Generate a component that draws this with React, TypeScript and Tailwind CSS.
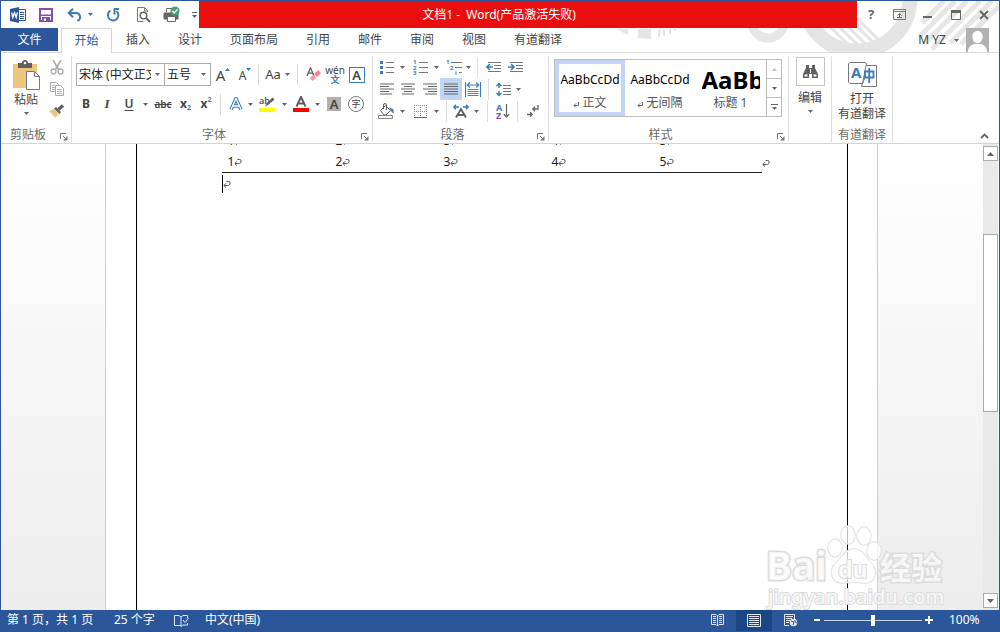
import React from "react";

type Kids = { children?: React.ReactNode };

const BLUE = "#3b7bb8";
const GRAY = "#5f5f5f";

function Svg({ w, h, children, className = "" }: Kids & { w: number; h: number; className?: string }) {
  return (
    <svg width={w} height={h} viewBox={`0 0 ${w} ${h}`} fill="none" aria-hidden="true" className={`shrink-0 ${className}`}>
      {children}
    </svg>
  );
}

function Caret() {
  return (
    <Svg w={5} h={3}>
      <path d="M0 0h5L2.5 3z" fill="#666" />
    </Svg>
  );
}

function Tool({ label, className = "w-5", children }: Kids & { label: string; className?: string }) {
  return (
    <button type="button" aria-label={label} className={`flex h-[22px] shrink-0 items-center justify-center ${className}`}>
      {children}
    </button>
  );
}

function Drop({ label, className = "w-[10px]" }: { label: string; className?: string }) {
  return (
    <Tool label={label} className={className}>
      <Caret />
    </Tool>
  );
}

function Sep({ className = "mx-1" }: { className?: string }) {
  return <span className={`h-[21px] w-px shrink-0 bg-[#dcdcdc] ${className}`} />;
}

function Group({ title, launcher = true, className, children }: Kids & { title: string; launcher?: boolean; className: string }) {
  return (
    <section aria-label={title} className={`flex shrink-0 flex-col border-r border-[#dedede] ${className}`}>
      <div className="min-h-0 flex-1">{children}</div>
      <div className="flex h-[14px] items-center text-[#6a6a6a]">
        <span className="flex-1 text-center leading-[14px] whitespace-nowrap">{title}</span>
        {launcher && (
          <button type="button" aria-label={`${title}设置`} className="w-4 pt-1 pl-[5px]">
            <Svg w={8} h={8}>
              <path d="M.5 6V.5H6M3 3l3 3" stroke="#777" />
              <path d="M7.500 3v4.500H3z" fill="#777" />
            </Svg>
          </button>
        )}
      </div>
    </section>
  );
}

function Lines({ rows }: { rows: [number, number][] }) {
  return (
    <Svg w={14} h={12}>
      {rows.map(([x, w], i) => (
        <rect key={i} x={x} y={i * 2.5 + 0.5} width={w} height="1" fill="#666" />
      ))}
    </Svg>
  );
}

function Return({ color = "#555" }: { color?: string }) {
  return (
    <Svg w={8} h={8}>
      <path d="M3.500 1.500h2.200a1.400 1.400 0 0 1 1.400 1.600c0 1.600-.8 2.400-2.400 2.400H1M3 3.300L.9 5.500 3 7.600" stroke={color} />
    </Svg>
  );
}

function Decoration() {
  return (
    <svg className="absolute top-0 right-0 h-[52px] w-[400px]" viewBox="600 0 400 52" aria-hidden="true" fill="none">
      <g fill="#e6e6e6">
        <path d="M617 28h12v6zM639 28h13v10l-13-1z" />
        <path d="M659 28h2v8h-2zM664 28h2v7h-2zM670 28h2v5h-2zM675 28h2v2h-2z" />
      </g>
      <circle cx="769" cy="21" r="16" stroke="#e6e6e6" strokeWidth="9" />
      <circle cx="858" cy="-3" r="53" stroke="#e4e4e4" strokeWidth="15" />
      <g stroke="#e4e4e4" strokeWidth="3">
        <path d="M822 17l34 33M829 15l34 33M837 14l34 33M846 14l30 29M855 15l27 26" />
      </g>
      <g stroke="#e6e6e6" strokeWidth="5">
        <path d="M945 0l-22 22M956 0l-36 36M968 0l-42 42M981 0l-48 48M993 0l-42 42M1000 5l-38 38" />
      </g>
    </svg>
  );
}

function QuickAccess() {
  return (
    <div className="flex h-[27px] w-[198px] shrink-0 items-center">
      <Tool label="Word" className="ml-[7px] w-5">
        <Svg w={16} h={16}>
          <path d="M8.500 2.500h7v11h-7" fill="#fff" stroke="#2b579a" />
          <path d="M10 5.500h4M10 7.500h4M10 9.500h4M10 11.500h4" stroke="#2b579a" />
          <path d="M0 2l9-2v16l-9-2z" fill="#2b579a" />
          <path d="M1.600 5.500l1.200 5 1.700-4.800 1.700 4.800 1.200-5" stroke="#fff" strokeWidth="1.300" />
        </Svg>
      </Tool>
      <Tool label="保存" className="ml-2 w-5">
        <Svg w={14} h={14}>
          <path d="M1 1h12v12H1z" stroke="#864cb0" strokeWidth="2" />
          <path d="M2 6.500h10v1.500H2zM3 9h8v4H3z" fill="#864cb0" />
          <path d="M5 10.500h2V13H5z" fill="#fff" />
        </Svg>
      </Tool>
      <Tool label="撤消" className="ml-[9px] w-5">
        <Svg w={16} h={14}>
          <path d="M2 5h7.500a4 4 0 0 1 .8 7.800" stroke={BLUE} strokeWidth="2" />
          <path d="M6 .8L1.700 5 6 9.200" stroke={BLUE} strokeWidth="2" />
        </Svg>
      </Tool>
      <Drop label="撤消列表" />
      <Tool label="重复" className="ml-2 w-5">
        <Svg w={14} h={14}>
          <path d="M4.500 2.500A5.300 5.300 0 1 0 10.500 3" stroke={BLUE} strokeWidth="2" />
          <path d="M8 1h5M8.500 1v5.500" stroke={BLUE} strokeWidth="2" />
        </Svg>
      </Tool>
      <Tool label="打印预览" className="ml-[10px] w-5">
        <Svg w={15} h={16}>
          <path d="M11.500 5V3.500l-3-3h-7v14h6" stroke="#777" />
          <path d="M8.500 1v3h3" stroke="#777" />
          <circle cx="7.500" cy="8.500" r="3.300" fill="#fff" stroke="#666" strokeWidth="1.500" />
          <path d="M10 11l4 4" stroke="#666" strokeWidth="2" />
        </Svg>
      </Tool>
      <Tool label="快速打印" className="ml-2 w-5">
        <Svg w={17} h={17}>
          <path d="M3.500 6V2.500h6M1 7h14v6H1z" stroke="#666" fill="none" />
          <path d="M1 7h14v6h-2v-2H4v2H1z" fill="#666" />
          <path d="M4.500 10.500h8v5h-8z" fill="#fff" stroke="#666" />
          <circle cx="12" cy="5" r="4.600" fill="#4f9f7c" />
          <path d="M9.500 5l1.800 1.900L14.500 3.400" stroke="#fff" strokeWidth="1.300" />
        </Svg>
      </Tool>
      <Tool label="自定义快速访问工具栏" className="ml-2 w-[10px]">
        <Svg w={5} h={6}>
          <path d="M0 .5h5" stroke="#666" />
          <path d="M0 3h5L2.500 6z" fill="#666" />
        </Svg>
      </Tool>
    </div>
  );
}

function WindowButtons() {
  return (
    <div className="flex h-[27px] w-[142px] shrink-0 items-center">
      <Tool label="帮助" className="w-7 text-[13px] font-bold text-[#666]">?</Tool>
      <Tool label="功能区显示选项" className="w-7">
        <Svg w={13} h={11}>
          <path d="M.5.500h12v10H.5zM1 2.500h11" stroke="#777" />
          <path d="M6.500 9V4.500M4.300 6.500l2.200-2.200 2.200 2.200M4 8.500h5" stroke="#666" />
        </Svg>
      </Tool>
      <Tool label="最小化" className="w-[29px] pt-1">
        <Svg w={9} h={2}><path d="M0 1h9" stroke="#666" strokeWidth="2" /></Svg>
      </Tool>
      <Tool label="最大化" className="w-7">
        <Svg w={10} h={10}>
          <path d="M.5 1h9v8.500h-9z" stroke="#666" />
          <path d="M0 1.500h10" stroke="#666" strokeWidth="3" />
        </Svg>
      </Tool>
      <Tool label="关闭" className="w-7">
        <Svg w={10} h={10}><path d="M1 1l8 8M9 1L1 9" stroke="#666" strokeWidth="2" /></Svg>
      </Tool>
    </div>
  );
}

const tabs = ["插入", "设计", "页面布局", "引用", "邮件", "审阅", "视图", "有道翻译"];

function TabBar() {
  return (
    <nav className="relative flex h-[25px] shrink-0 items-stretch border-b border-[#dadada] text-[#444]">
      <button type="button" className="mb-px w-[57px] bg-[#2b579a] text-white">文件</button>
      <button type="button" className="-mb-px ml-[3px] w-[51px] border border-b-0 border-[#d5d5d5] bg-white text-[#2b579a]">开始</button>
      {tabs.map((t) => (
        <button key={t} type="button" className="px-[14px] whitespace-nowrap">{t}</button>
      ))}
      <div className="ml-auto flex items-center pr-[10px]">
        <button type="button" className="flex items-center gap-2">M YZ<Caret /></button>
        <Svg w={23} h={24} className="ml-[7px]">
          <path d="M0 0h23v24H0z" fill="#b1b1b1" />
          <ellipse cx="11.500" cy="9" rx="5.200" ry="6.200" fill="#fff" />
          <path d="M2 24c0-5 3-7.500 7-8h5c4 .5 7 3 7 8z" fill="#fff" />
        </Svg>
      </div>
    </nav>
  );
}

function Clipboard() {
  return (
    <Group title="剪贴板" className="w-[71px]">
      <div className="flex">
        <button type="button" className="ml-[5px] flex w-10 flex-col items-center pt-1">
          <Svg w={28} h={31}>
            <path d="M1 4h24v24H1z" fill="#ecc67e" />
            <path d="M6 3h4a3 3 0 0 1 6 0h4v5H6z" fill="#606060" />
            <circle cx="13" cy="3" r="1.300" fill="#fff" />
            <path d="M14.500 11.500h8l5 5v13h-13z" fill="#fff" stroke="#777" />
            <path d="M22.500 12v4.500h5" stroke="#777" />
          </Svg>
          <span className="pt-px leading-4">粘贴</span>
          <span className="mt-1"><Caret /></span>
        </button>
        <div className="flex flex-col">
          <Tool label="剪切" className="w-[21px]">
            <Svg w={14} h={15}>
              <path d="M3 0l5.500 9.500M11 0L5.500 9.500" stroke="#aaa" strokeWidth="1.600" />
              <circle cx="3.500" cy="11.500" r="2.500" stroke="#aaa" strokeWidth="1.300" />
              <circle cx="10.500" cy="11.500" r="2.500" stroke="#aaa" strokeWidth="1.300" />
            </Svg>
          </Tool>
          <Tool label="复制" className="w-[21px]">
            <Svg w={14} h={14}>
              <path d="M.5.500h6l2 2v7h-8z" fill="#fff" stroke="#aaa" />
              <path d="M5.500 3.500h5l3 3v7h-8z" fill="#fff" stroke="#aaa" />
              <path d="M7 7.500h5M7 9.500h5M7 11.500h5M2 3.500h3M2 5.500h3M2 7.500h3" stroke="#b5b5b5" />
            </Svg>
          </Tool>
          <Tool label="格式刷" className="w-[21px]">
            <Svg w={16} h={14}>
              <path d="M0 7l5-2 5 4.500L6.500 14z" fill="#ecc67e" />
              <path d="M5 4.500l2-1.500 5 5-1.500 2z" fill="#606060" />
              <path d="M9.500 5.500L14 1.500" stroke="#606060" strokeWidth="3.200" />
            </Svg>
          </Tool>
        </div>
      </div>
    </Group>
  );
}

function Combo({ label, value, className }: { label: string; value: string; className: string }) {
  return (
    <label className={`relative h-[23px] shrink-0 border border-[#ababab] bg-white ${className}`}>
      <span className="sr-only">{label}</span>
      <select defaultValue={value} className="block h-full w-full appearance-none overflow-hidden bg-transparent pr-[13px] pl-[2px] text-[12px] leading-[20px] text-[#222] outline-none">
        <option>{value}</option>
      </select>
      <span className="pointer-events-none absolute top-[9px] right-1"><Caret /></span>
    </label>
  );
}

function FontGroup() {
  return (
    <Group title="字体" className="w-[301px]">
      <div className="flex items-center pt-[7px] pl-1">
        <Combo label="字体" value="宋体 (中文正文)" className="w-[89px]" />
        <Combo label="字号" value="五号" className="-ml-px w-[47px]" />
        <Tool label="增大字号" className="ml-px w-[22px]">
          <span className="text-[15px] leading-4">A</span>
          <Svg w={5} h={3} className="-mt-[10px]"><path d="M0 3h5L2.500 0z" fill={BLUE} /></Svg>
        </Tool>
        <Tool label="减小字号" className="w-[22px]">
          <span className="pt-[2px] text-[12px] leading-4">A</span>
          <Svg w={5} h={3} className="-mt-[10px]"><path d="M0 0h5L2.500 3z" fill={BLUE} /></Svg>
        </Tool>
        <Sep className="mr-1 ml-[2px]" />
        <Tool label="更改大小写" className="w-[29px] gap-1"><span className="text-[13px]">Aa</span><Caret /></Tool>
        <Sep className="mr-1 ml-[5px]" />
        <Tool label="清除格式" className="w-[22px]">
          <Svg w={15} h={15}>
            <path d="M1 9L4.500.800 8 9M2.200 6.200h4.600" stroke={GRAY} strokeWidth="1.300" />
            <path d="M8 7l4-4 3 3-4 4z" fill="#e8899a" />
            <path d="M7.300 7.700l3 3L6.500 14 3.600 11z" fill="#ef9dac" />
          </Svg>
        </Tool>
        <Tool label="拼音指南" className="w-[22px] flex-col">
          <span className="text-[10px] leading-[9px]">wén</span>
          <span className="text-[9px] leading-[9px] font-bold text-[#3b7bb8]">文</span>
        </Tool>
        <Tool label="字符边框" className="w-[21px]">
          <span className="flex h-4 w-4 items-center justify-center border border-[#3b7bb8] text-[13px] leading-4 font-semibold">A</span>
        </Tool>
      </div>
      <div className="flex items-center pt-[7px] pl-1">
        <Tool label="加粗" className="w-5 font-bold">B</Tool>
        <Tool label="倾斜" className="w-[22px] font-['Liberation_Serif'] text-[13px] font-bold italic">I</Tool>
        <Tool label="下划线" className="w-[22px] font-semibold underline underline-offset-2">U</Tool>
        <Drop label="下划线样式" />
        <Tool label="删除线" className="w-[26px] text-[10px] font-semibold line-through">abc</Tool>
        <Tool label="下标" className="w-[19px] font-bold">x<span className="pt-2 text-[7px] text-[#3b7bb8]">2</span></Tool>
        <Tool label="上标" className="w-[22px] font-bold">x<span className="pb-2 text-[7px] text-[#3b7bb8]">2</span></Tool>
        <Sep className="mr-[5px] ml-[3px]" />
        <Tool label="文本效果" className="w-5">
          <Svg w={14} h={14}>
            <path d="M2 12.500L7 1.500l5 11M4 9h6" stroke={BLUE} strokeWidth="3.400" strokeLinejoin="round" />
            <path d="M2 12.500L7 1.500l5 11M4 9h6" stroke="#fff" strokeWidth="1.300" />
          </Svg>
        </Tool>
        <Drop label="文本效果列表" className="w-[8px]" />
        <Tool label="突出显示" className="w-[26px]">
          <Svg w={16} h={16}>
            <text x="0" y="8" fontSize="9" fontWeight="600" fill="#555">ab</text>
            <path d="M6 10.500l2-3.500L13.500 1.500l2 2L9 9z" fill="#606060" />
            <path d="M0 12h16v4H0z" fill="#ff0" />
          </Svg>
        </Tool>
        <Drop label="突出显示颜色" className="w-[8px]" />
        <Tool label="字体颜色" className="w-[25px]">
          <Svg w={16} h={16}>
            <path d="M3.500 10.500L8 1l4.500 9.500M5 7.500h6" stroke={GRAY} strokeWidth="2" />
            <path d="M0 12h16v4H0z" fill="#f00" />
          </Svg>
        </Tool>
        <Drop label="字体颜色列表" className="w-[8px]" />
        <Tool label="字符底纹" className="ml-px w-6">
          <span className="flex h-[14px] w-[14px] items-center justify-center bg-[#b1b1b1] text-[13px] leading-[14px] font-semibold">A</span>
        </Tool>
        <Tool label="带圈字符" className="w-5">
          <span className="flex h-4 w-4 items-center justify-center rounded-full border border-[#777] text-[9px] leading-[14px]">字</span>
        </Tool>
      </div>
    </Group>
  );
}

function ParagraphGroup() {
  return (
    <Group title="段落" className="w-[176px]">
      <div className="flex items-center pl-[3px]">
        <Tool label="项目符号" className="w-[21px]">
          <Svg w={14} h={14}>
            <path d="M0 1h3v3H0zM0 6h3v3H0zM0 11h3v3H0z" fill={BLUE} />
            <path d="M6 2.500h8M6 7.500h8M6 12.500h8" stroke="#777" />
          </Svg>
        </Tool>
        <Drop label="项目符号库" />
        <Tool label="编号" className="ml-[2px] w-[22px]">
          <Svg w={15} h={16}>
            <g fill={BLUE} fontSize="6" fontWeight="700"><text x="0" y="5">1</text><text x="0" y="10.500">2</text><text x="0" y="16">3</text></g>
            <path d="M6 3.500h9M6 8.500h9M6 13.500h9" stroke="#777" />
          </Svg>
        </Tool>
        <Drop label="编号库" />
        <Tool label="多级列表" className="ml-[2px] w-[22px]">
          <Svg w={16} h={16}>
            <g fill={BLUE} fontSize="6" fontWeight="700"><text x="0" y="5">1</text><text x="4" y="10.500">2</text><text x="9" y="16">i</text></g>
            <path d="M5 3.500h11M9 8.500h7M13 13.500h3" stroke="#777" />
          </Svg>
        </Tool>
        <Drop label="多级列表库" className="w-[7px]" />
        <Sep className="mx-[5px]" />
        <Tool label="减少缩进量" className="w-[22px]">
          <Svg w={16} h={12}>
            <path d="M2 1.500h13M8 4.500h7M8 7.500h7M2 10.500h13" stroke="#777" />
            <path d="M7 6H1M4 3L1 6l3 3" stroke={BLUE} strokeWidth="1.600" />
          </Svg>
        </Tool>
        <Tool label="增加缩进量" className="w-[22px]">
          <Svg w={16} h={12}>
            <path d="M2 1.500h13M8 4.500h7M8 7.500h7M2 10.500h13" stroke="#777" />
            <path d="M0 6h6M3 3l3 3-3 3" stroke={BLUE} strokeWidth="1.600" />
          </Svg>
        </Tool>
      </div>
      <div className="flex items-center pl-[3px]">
        <Tool label="左对齐" className="w-[21px]"><Lines rows={[[0, 14], [0, 9], [0, 14], [0, 9], [0, 12]]} /></Tool>
        <Tool label="居中" className="w-[22px]"><Lines rows={[[0, 14], [3, 8], [0, 14], [3, 8], [1, 12]]} /></Tool>
        <Tool label="右对齐" className="w-[21px]"><Lines rows={[[0, 14], [5, 9], [0, 14], [5, 9], [2, 12]]} /></Tool>
        <Tool label="两端对齐" className="w-[22px] bg-[#c2d5f2]"><Lines rows={[[0, 14], [0, 14], [0, 14], [0, 14], [0, 14]]} /></Tool>
        <Tool label="分散对齐" className="w-[21px]">
          <Svg w={16} h={15}>
            <path d="M.5 0v15M15.500 0v15M2 3h12M5 .5L2.300 3 5 5.500M11 .5L13.700 3 11 5.500" stroke={BLUE} strokeWidth="1.200" />
            <path d="M2.500 7.500h11M2.500 9.500h11M2.500 11.500h11M2.500 13.500h11" stroke="#777" />
          </Svg>
        </Tool>
        <Sep className="mr-1 ml-[5px]" />
        <Tool label="行距" className="w-[20px]">
          <Svg w={15} h={15}>
            <path d="M3 1v5M3 9v5M.5 4L3 1.500 5.500 4M.5 11L3 13.500 5.500 11" stroke={BLUE} strokeWidth="1.500" />
            <path d="M7 3.500h8M7 6.500h8M7 9.500h8M7 12.500h8" stroke="#777" />
          </Svg>
        </Tool>
        <Drop label="行距选项" />
      </div>
      <div className="flex items-center pl-[3px]">
        <Tool label="底纹" className="w-[21px]">
          <Svg w={17} h={16}>
            <path d="M2.500 7.500l5-5 5 5-4.500 4.500h-2z" fill="#fff" stroke={GRAY} />
            <path d="M5.500 6V2a1.500 1.500 0 0 1 3 0v5" stroke={GRAY} />
            <path d="M11 4l4.500 2.500V11L13 8z" fill={BLUE} />
            <path d="M.5 12.500h14v3H.5z" fill="#fff" stroke="#888" />
          </Svg>
        </Tool>
        <Drop label="底纹颜色" />
        <Tool label="边框" className="ml-[2px] w-[22px]">
          <Svg w={13} h={13}>
            <path d="M.5 0v12M6.500 0v12M12.500 0v12M0 .5h13M0 6.500h13" stroke="#888" strokeDasharray="1 1" />
            <path d="M0 12.500h13" stroke="#666" />
          </Svg>
        </Tool>
        <Drop label="边框列表" />
        <Sep className="mr-[3px] ml-[5px]" />
        <Tool label="中文版式" className="w-[22px]">
          <Svg w={16} h={14}>
            <path d="M3 13.500L8 5l5 8.500M4.500 11h7" stroke={GRAY} strokeWidth="1.900" />
            <path d="M1 3h5M3 .8L.8 3 3 5.200M10 3h5M13 .8L15.200 3 13 5.200" stroke={BLUE} strokeWidth="1.400" />
          </Svg>
        </Tool>
        <Drop label="中文版式列表" className="w-[8px]" />
        <Sep className="mr-[5px] ml-[7px]" />
        <Tool label="排序" className="w-[20px]">
          <Svg w={14} h={16}>
            <text x="0" y="8" fontSize="9" fontWeight="700" fill={BLUE}>A</text>
            <text x="0" y="16" fontSize="9" fontWeight="700" fill="#864cb0">Z</text>
            <path d="M10.500 1v13M7.800 11l2.700 3 2.700-3" stroke="#666" strokeWidth="1.200" />
          </Svg>
        </Tool>
        <Sep className="mr-[5px] ml-[4px]" />
        <Tool label="显示编辑标记" className="w-[20px]">
          <Svg w={12} h={13}>
            <path d="M11 0v4H6M8 1.800L5.800 4 8 6.200M0 9.500h5M3 7.300l2.200 2.200L3 11.700" stroke="#666" strokeWidth="1.300" />
          </Svg>
        </Tool>
      </div>
    </Group>
  );
}

function StyleName({ mark, children }: Kids & { mark?: boolean }) {
  return (
    <span className="flex items-center gap-[3px] leading-4 whitespace-nowrap text-[#555]">
      {mark && (
        <Svg w={6} h={6} className="mt-1"><path d="M5.500 0v3.500H1M3 1.500l-2 2 2 2" stroke="#666" /></Svg>
      )}
      {children}
    </span>
  );
}

function StylesGroup() {
  return (
    <Group title="样式" className="w-[240px]">
      <div className="pt-[3px] pl-[5px]">
        <div className="flex h-[58px] w-[228px] border border-[#bdbdbd]">
          <button type="button" className="flex w-[70px] flex-col items-center border-4 border-[#c2d5f2] pt-[6px]">
            <span className="text-[12px] leading-5 text-black">AaBbCcDd</span>
            <span className="pt-[5px]"><StyleName mark>正文</StyleName></span>
          </button>
          <button type="button" className="flex w-[70px] flex-col items-center pt-[10px]">
            <span className="text-[12px] leading-5 text-black">AaBbCcDd</span>
            <span className="pt-[5px]"><StyleName mark>无间隔</StyleName></span>
          </button>
          <button type="button" className="flex w-[71px] flex-col items-center pt-1">
            <span className="w-[58px] overflow-hidden text-left text-[24px] leading-[31px] font-bold text-black">AaBb</span>
            <StyleName>标题 1</StyleName>
          </button>
          <div className="flex flex-1 flex-col divide-y divide-[#bdbdbd] border-l border-[#bdbdbd]">
            <button type="button" aria-label="上一行" className="flex flex-1 items-center justify-center"><Svg w={5} h={3}><path d="M0 3h5L2.500 0z" fill="#c0c0c0" /></Svg></button>
            <button type="button" aria-label="下一行" className="flex flex-1 items-center justify-center"><Caret /></button>
            <button type="button" aria-label="其他样式" className="flex flex-1 items-center justify-center"><Svg w={7} h={6}><path d="M0 .5h7" stroke="#666" /><path d="M1 3h5L3.500 6z" fill="#666" /></Svg></button>
          </div>
        </div>
      </div>
    </Group>
  );
}

function Ribbon() {
  return (
    <div className="flex h-[91px] shrink-0 border-b border-[#d4d4d4] pt-[3px] pb-px text-[#444]">
      <Clipboard />
      <FontGroup />
      <ParagraphGroup />
      <StylesGroup />
      <section aria-label="编辑" className="w-[43px] shrink-0 border-r border-[#dedede] pt-px">
        <button type="button" className="mx-auto flex flex-col items-center">
          <span className="flex h-[29px] w-[29px] items-center justify-center border border-[#c6c6c6]">
            <Svg w={15} h={13}>
              <path d="M3 0h3v3h3V0h3v3l3 6v4H9V9H6v4H0V9l3-6z" fill="#606060" />
              <path d="M1.500 9.500h3v2h-3zM10.500 9.500h3v2h-3zM7 4h1v4H7z" fill="#fff" />
            </Svg>
          </span>
          <span className="pt-1 leading-4">编辑</span>
          <span className="pt-1"><Caret /></span>
        </button>
      </section>
      <Group title="有道翻译" launcher={false} className="w-[61px]">
        <button type="button" className="flex w-full flex-col items-center pt-[6px] leading-[15px]">
          <Svg w={29} h={25}>
            <path d="M15.500 3.500h13v21h-15l3-8z" fill="#fff" stroke="#777" />
            <path d="M2 .5h15l1.500 1-4 20H2L.5 20V2z" fill="#fff" stroke="#777" />
            <text x="3" y="16" fontSize="15" fontWeight="700" fill={BLUE}>A</text>
            <path d="M17 9.500h8.500v6H17zM21.200 6v15" stroke={BLUE} strokeWidth="1.800" />
          </Svg>
          <span className="pt-1">打开</span>
          <span className="whitespace-nowrap">有道翻译</span>
        </button>
      </Group>
      <button type="button" aria-label="折叠功能区" className="mt-auto mr-[10px] mb-[3px] ml-auto">
        <Svg w={9} h={6}><path d="M1 5l3.500-3.500L8 5" stroke="#666" strokeWidth="1.800" /></Svg>
      </button>
    </div>
  );
}

function DocRow() {
  return (
    <tr>
      {["1", "2", "3", "4", "5"].map((n) => (
        <td key={n} className="h-[21px] w-[108px] p-0 pl-[6px]">
          <span className="flex items-center leading-[21px]">{n}<Return /></span>
        </td>
      ))}
    </tr>
  );
}

function Watermark() {
  return (
    <svg className="pointer-events-none absolute right-[50px] bottom-0 h-[90px] w-[184px]" viewBox="0 0 184 90" aria-hidden="true">
      <g fill="#fff" fillOpacity=".75" stroke="#dcdcdc" strokeWidth="1.500" paintOrder="stroke">
        <text x="1" y="60" fontSize="39" fontWeight="700" strokeWidth="3">Bai</text>
        <path d="M89 29c9 0 11 8 17 14 8 8 4 21-7 20-7-1-13-1-20 0-12 1-17-12-8-20 6-6 9-14 18-14z" />
        <ellipse cx="70" cy="28" rx="7" ry="9" />
        <ellipse cx="83" cy="15" rx="7" ry="9" />
        <ellipse cx="99" cy="16" rx="7" ry="9" />
        <ellipse cx="109" cy="31" rx="7" ry="9" />
        <text x="73" y="58" fontSize="23" fontWeight="700" strokeWidth="2">du</text>
        <text x="115" y="59" fontSize="31" fontWeight="700" strokeWidth="3">经验</text>
        <text x="3" y="84" fontSize="20" fontWeight="500" strokeWidth="2">jingyan.baidu.com</text>
      </g>
    </svg>
  );
}

function DocumentArea() {
  return (
    <main className="relative flex min-h-0 flex-1 bg-linear-to-b from-white to-[#ededed]">
      <div className="flex min-w-0 flex-1 justify-center overflow-hidden pr-[2px]">
        <article className="w-[773px] shrink-0 border-x border-[#cfcfcf] bg-white pr-[29px] pl-[30px]">
          <div className="h-full overflow-hidden border-x border-black pl-[85px] text-[12px] text-[#222]">
            <div className="-mt-[14px] flex items-end">
              <table className="border-collapse border-b border-[#222]">
                <tbody>
                  <DocRow />
                  <DocRow />
                </tbody>
              </table>
              <span className="pb-[6px]"><Return /></span>
            </div>
            <div className="mt-[2px] flex h-[18px] items-center border-l border-black"><Return /></div>
          </div>
        </article>
      </div>
      <div className="mr-px flex w-[15px] shrink-0 flex-col bg-[#e9e9e9] pt-[2px] pb-[2px]">
        <button type="button" aria-label="向上滚动" className="flex h-[15px] items-center justify-center border border-[#ababab] bg-white"><Svg w={7} h={4}><path d="M0 4h7L3.500 0z" fill="#666" /></Svg></button>
        <div className="flex-[73]" />
        <div className="flex-[178] border border-[#ababab] bg-white" />
        <div className="flex-[182]" />
        <button type="button" aria-label="向下滚动" className="flex h-[15px] items-center justify-center border border-[#ababab] bg-white"><Svg w={7} h={4}><path d="M0 0h7L3.500 4z" fill="#666" /></Svg></button>
      </div>
      <Watermark />
    </main>
  );
}

function StatusBar() {
  return (
    <footer className="flex h-[22px] shrink-0 items-center bg-[#2b579a] pr-[18px] pb-[2px] pl-[6px] whitespace-nowrap text-white">
      <span className="w-[107px]">第 1 页，共 1 页</span>
      <span className="w-[60px]">25 个字</span>
      <button type="button" aria-label="校对" className="w-[31px]">
        <Svg w={15} h={13}>
          <path d="M7 11.500H.5v-10H5l2 1.500v9.500M7 3l2-1.500h4.500V4M7 12.500l2-1.500h4.500V9M9 6l2 2.500L14.500 4" stroke="#dfe8f4" />
        </Svg>
      </button>
      <span>中文(中国)</span>
      <div className="ml-auto flex h-full items-center">
        <Tool label="阅读视图" className="w-[38px]">
          <Svg w={13} h={13}>
            <path d="M6.500 2L5 .5H.5v10H5L6.500 12 8 10.500h4.500V.5H8zM6.500 2v10" stroke="#dfe8f4" />
            <path d="M2 2.500h3M2 4.500h3M2 6.500h3M2 8.500h3M8 2.500h3M8 4.500h3M8 6.500h3M8 8.500h3" stroke="#dfe8f4" />
          </Svg>
        </Tool>
        <Tool label="页面视图" className="w-9 bg-[#1b4684]">
          <Svg w={14} h={13}><path d="M.5.500h13v12H.5zM2 2.500h10M2 4.500h10M2 6.500h10M2 8.500h10M2 10.500h10" stroke="#dfe8f4" /></Svg>
        </Tool>
        <Tool label="Web 版式视图" className="w-[38px]">
          <Svg w={14} h={13}>
            <path d="M5 11.500H.5V.5h10V5M2 2.500h7M2 4.500h6M2 6.500h4M2 8.500h3" stroke="#dfe8f4" />
            <circle cx="9.500" cy="8.500" r="3.800" fill="#dfe8f4" />
            <path d="M7 7l3 1-1 3M11 6v2l2 1" stroke="#2b579a" />
          </Svg>
        </Tool>
        <button type="button" aria-label="缩小" className="ml-1"><Svg w={7} h={8}><path d="M0 4h6" stroke="#fff" strokeWidth="2" /></Svg></button>
        <input
          type="range"
          aria-label="显示比例"
          min={0}
          max={100}
          defaultValue={50}
          className="mx-[3px] h-4 w-[98px] appearance-none bg-transparent [&::-webkit-slider-runnable-track]:h-px [&::-webkit-slider-runnable-track]:bg-[#c9d6e8] [&::-webkit-slider-thumb]:-mt-[5px] [&::-webkit-slider-thumb]:h-[11px] [&::-webkit-slider-thumb]:w-1 [&::-webkit-slider-thumb]:appearance-none [&::-webkit-slider-thumb]:bg-white"
        />
        <button type="button" aria-label="放大"><Svg w={8} h={8}><path d="M0 4h8M4 0v8" stroke="#fff" strokeWidth="2" /></Svg></button>
        <span className="ml-4 w-8">100%</span>
      </div>
    </footer>
  );
}

export default function App() {
  return (
    <div className="relative flex h-screen flex-col overflow-hidden border border-b-0 border-[#2b579a] bg-white font-['Noto_Sans','Noto_Sans_CJK_SC',sans-serif] text-[12px] text-[#444]">
      <Decoration />
      <header className="relative flex h-[27px] shrink-0">
        <QuickAccess />
        <h1 className="-mt-px flex min-w-0 flex-1 items-center justify-center bg-[#ea0f0f] pt-[2px] pr-[58px] font-normal whitespace-pre text-white">文档1 -  Word(产品激活失败)</h1>
        <WindowButtons />
      </header>
      <TabBar />
      <Ribbon />
      <DocumentArea />
      <StatusBar />
    </div>
  );
}
